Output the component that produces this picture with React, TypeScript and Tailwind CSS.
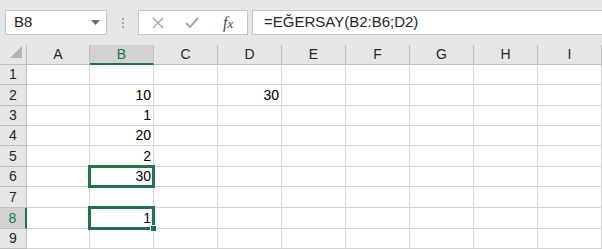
import React from 'react'

const cols = ['A', 'B', 'C', 'D', 'E', 'F', 'G', 'H', 'I']
const rowHeights = [20, 21, 20, 20, 21, 20, 21, 21, 20]

const values: Record<string, string> = {
  B2: '10',
  D2: '30',
  B3: '1',
  B4: '20',
  B5: '2',
  B6: '30',
  B8: '1',
}

function Toolbar() {
  return (
    <div className="h-[45px] bg-[#e6e6e6] flex items-start pt-[10px] pl-[5px]">
      <div className="w-[102px] h-[25px] bg-white border border-[#c6c6c6] flex items-center justify-between pl-[8px] pr-[6px]">
        <span className="text-[15px] text-[#262626]">B8</span>
        <svg width="9" height="5" viewBox="0 0 9 5">
          <path d="M0 0 L9 0 L4.5 5 Z" fill="#707070" />
        </svg>
      </div>
      <div className="w-[31px] h-[25px] flex flex-col items-center justify-center gap-[2px]">
        <span className="w-[2px] h-[2px] bg-[#a6a6a6]" />
        <span className="w-[2px] h-[2px] bg-[#a6a6a6]" />
        <span className="w-[2px] h-[2px] bg-[#a6a6a6]" />
      </div>
      <div className="w-[110px] h-[25px] bg-white border border-[#c6c6c6] flex items-center">
        <svg className="ml-[13px]" width="12" height="12" viewBox="0 0 12 12">
          <path d="M1 1 L11 11 M11 1 L1 11" stroke="#a6a6a6" strokeWidth="1.4" />
        </svg>
        <svg className="ml-[21px]" width="14" height="11" viewBox="0 0 14 11">
          <path d="M1 6 L5 10 L13 1" stroke="#a6a6a6" strokeWidth="2" fill="none" />
        </svg>
        <span className="ml-[24px] text-[16px] italic text-[#444444] font-['Liberation_Serif',serif] leading-none">
          f<span className="text-[13px]">x</span>
        </span>
      </div>
      <div className="ml-[4px] flex-1 h-[25px] bg-white border border-[#c6c6c6] border-r-0 flex items-center pl-[11px]">
        <span className="text-[15px] text-[#262626]">=EĞERSAY(B2:B6;D2)</span>
      </div>
    </div>
  )
}

function HeaderRow() {
  return (
    <div className="flex h-[20px]">
      <div className="w-[27px] h-full bg-[#e6e6e6] border-r border-b border-[#bdbdbd] relative">
        <svg className="absolute right-[4px] bottom-[6px]" width="12" height="12" viewBox="0 0 12 12">
          <path d="M12 0 L12 12 L0 12 Z" fill="#b4b4b4" />
        </svg>
      </div>
      {cols.map((c, i) => (
        <div
          key={c}
          className={`${i === 0 ? 'w-[63px]' : 'w-[64px]'} h-full flex items-center justify-center text-[14px] border-r ${
            c === 'B'
              ? 'bg-[#d2d2d2] text-[#217346] border-b-2 border-b-[#217346] border-r-[#bdbdbd]'
              : 'bg-[#e6e6e6] text-[#262626] border-b border-[#bdbdbd]'
          }`}
        >
          {c}
        </div>
      ))}
      <div className="flex-1 h-full bg-[#e6e6e6] border-b border-[#bdbdbd]" />
    </div>
  )
}

function Row({ n, h }: { n: number; h: number }) {
  const active = n === 8
  return (
    <div className="flex" style={{ height: h }}>
      <div
        className={`w-[27px] h-full flex items-center justify-center text-[14px] border-b border-[#bdbdbd] ${
          active
            ? 'bg-[#d2d2d2] text-[#217346] border-r-2 border-r-[#217346]'
            : 'bg-[#e6e6e6] text-[#262626] border-r border-r-[#bdbdbd]'
        }`}
      >
        {n}
      </div>
      {cols.map((c, i) => {
        const id = `${c}${n}`
        const selected = id === 'B6' || id === 'B8'
        return (
          <div
            key={c}
            className={`${i === 0 ? 'w-[63px]' : 'w-[64px]'} h-full relative bg-white border-r border-b border-[#d4d4d4] flex items-end justify-end pr-[2px] pb-[1px] text-[14px] leading-[18px] text-black`}
          >
            {values[id]}
            {selected && (
              <div className="absolute top-[-2px] left-[-2px] right-[-2px] bottom-[-2px] border-[3px] border-[#217346] z-10" />
            )}
            {id === 'B8' && (
              <div className="absolute right-[-4px] bottom-[-4px] w-[7px] h-[7px] bg-[#217346] border border-white z-20" />
            )}
          </div>
        )
      })}
      <div className="flex-1 h-full bg-white border-b border-[#d4d4d4]" />
    </div>
  )
}

export default function App() {
  return (
    <div className="w-[602px] h-[249px] overflow-hidden bg-white font-['Liberation_Sans',Arial,sans-serif]">
      <Toolbar />
      <HeaderRow />
      {rowHeights.map((h, i) => (
        <Row key={i} n={i + 1} h={h} />
      ))}
    </div>
  )
}
